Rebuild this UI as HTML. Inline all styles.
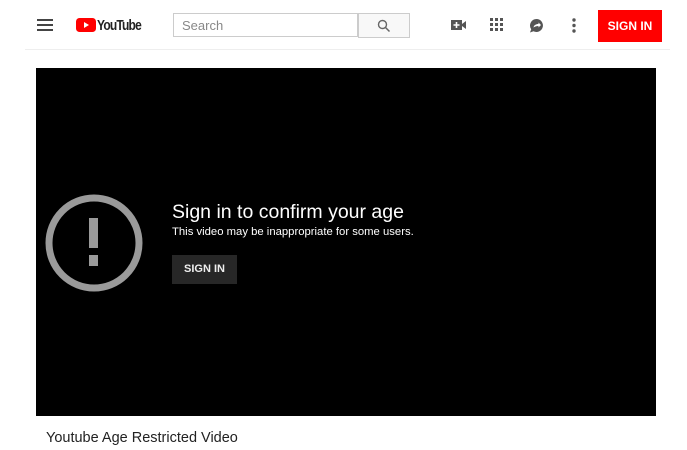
<!DOCTYPE html>
<html><head><meta charset="utf-8"><style>
body{margin:0;width:687px;height:450px;background:#fff;font-family:"Liberation Sans",Arial,sans-serif;position:relative;overflow:hidden}
.a{position:absolute}
</style></head><body>
<svg class="a" style="left:37px;top:18px" width="17" height="14"><rect y="1" width="16" height="2" fill="#444"/><rect y="6" width="16" height="2" fill="#444"/><rect y="11" width="16" height="2" fill="#444"/></svg>
<svg class="a" style="left:76px;top:18px" width="20" height="14"><rect width="20" height="14" rx="3.5" fill="#f00"/><path d="M8 4v6l5-3z" fill="#fff"/></svg>
<div class="a" style="left:97px;top:17px;font-size:15px;font-weight:bold;letter-spacing:-1px;color:#222;transform:scaleX(.8);transform-origin:left">YouTube</div>
<div class="a" style="left:173px;top:13px;width:185px;height:24px;border:1px solid #ccc;box-sizing:border-box;"></div>
<div class="a" style="left:182px;top:18px;font-size:13px;color:#888">Search</div>
<div class="a" style="left:358px;top:13px;width:52px;height:25px;border:1px solid #ccc;background:#f8f8f8;box-sizing:border-box"></div>
<svg class="a" style="left:377px;top:19px" width="14" height="14"><circle cx="5.5" cy="5.5" r="4" fill="none" stroke="#666" stroke-width="1.4"/><path d="M8.5 8.5l4 4" stroke="#666" stroke-width="1.5"/></svg>
<svg class="a" style="left:451px;top:19px" width="16" height="12"><rect x="0" y="1" width="11" height="10" fill="#555"/><path d="M11 5l4-3v8l-4-3z" fill="#555"/><path d="M5.5 3v6M2.5 6h6" stroke="#fff" stroke-width="1.6"/></svg>
<svg class="a" style="left:490px;top:18px" width="15" height="15" fill="#555"><rect x="0" y="0" width="3" height="3"/><rect x="5" y="0" width="3" height="3"/><rect x="10" y="0" width="3" height="3"/><rect x="0" y="5" width="3" height="3"/><rect x="5" y="5" width="3" height="3"/><rect x="10" y="5" width="3" height="3"/><rect x="0" y="10" width="3" height="3"/><rect x="5" y="10" width="3" height="3"/><rect x="10" y="10" width="3" height="3"/></svg>
<svg class="a" style="left:529px;top:18px" width="16" height="16"><path d="M7.5 1a6.5 6.5 0 1 1-3 12.3L1 14.5l1.2-3.3A6.5 6.5 0 0 1 7.5 1z" fill="#555"/><path d="M4.5 9.5c.5-2.5 2.5-3.5 5-3.5V4.5l2.5 2.5-2.5 2.5V8c-2 0-3.5.5-5 1.5z" fill="#fff"/></svg>
<svg class="a" style="left:572px;top:18px" width="4" height="15" fill="#555"><circle cx="2" cy="2" r="1.7"/><circle cx="2" cy="7.5" r="1.7"/><circle cx="2" cy="13" r="1.7"/></svg>
<div class="a" style="left:598px;top:10px;width:64px;height:32px;background:#f00;color:#fff;font-size:12px;font-weight:bold;line-height:32px;text-align:center">SIGN IN</div>
<div class="a" style="left:25px;top:49px;width:645px;height:1px;background:#eee"></div>
<div class="a" style="left:36px;top:68px;width:620px;height:348px;background:#000"></div>
<svg class="a" style="left:45px;top:194px" width="100" height="100"><circle cx="49" cy="49" r="45" fill="none" stroke="#9a9a9a" stroke-width="7"/><rect x="44" y="24" width="9" height="30" fill="#9a9a9a"/><rect x="44" y="61" width="9" height="11" fill="#9a9a9a"/></svg>
<div class="a" style="left:172px;top:201px;font-size:19.5px;color:#fff">Sign in to confirm your age</div>
<div class="a" style="left:172px;top:226px;font-size:11.3px;color:#fff">This video may be inappropriate for some users.</div>
<div class="a" style="left:172px;top:255px;width:65px;height:29px;background:#272727;color:#eee;font-size:11px;font-weight:bold;line-height:29px;text-align:center">SIGN IN</div>
<div class="a" style="left:46px;top:430px;font-size:14.5px;color:#222">Youtube Age Restricted Video</div>
</body></html>
